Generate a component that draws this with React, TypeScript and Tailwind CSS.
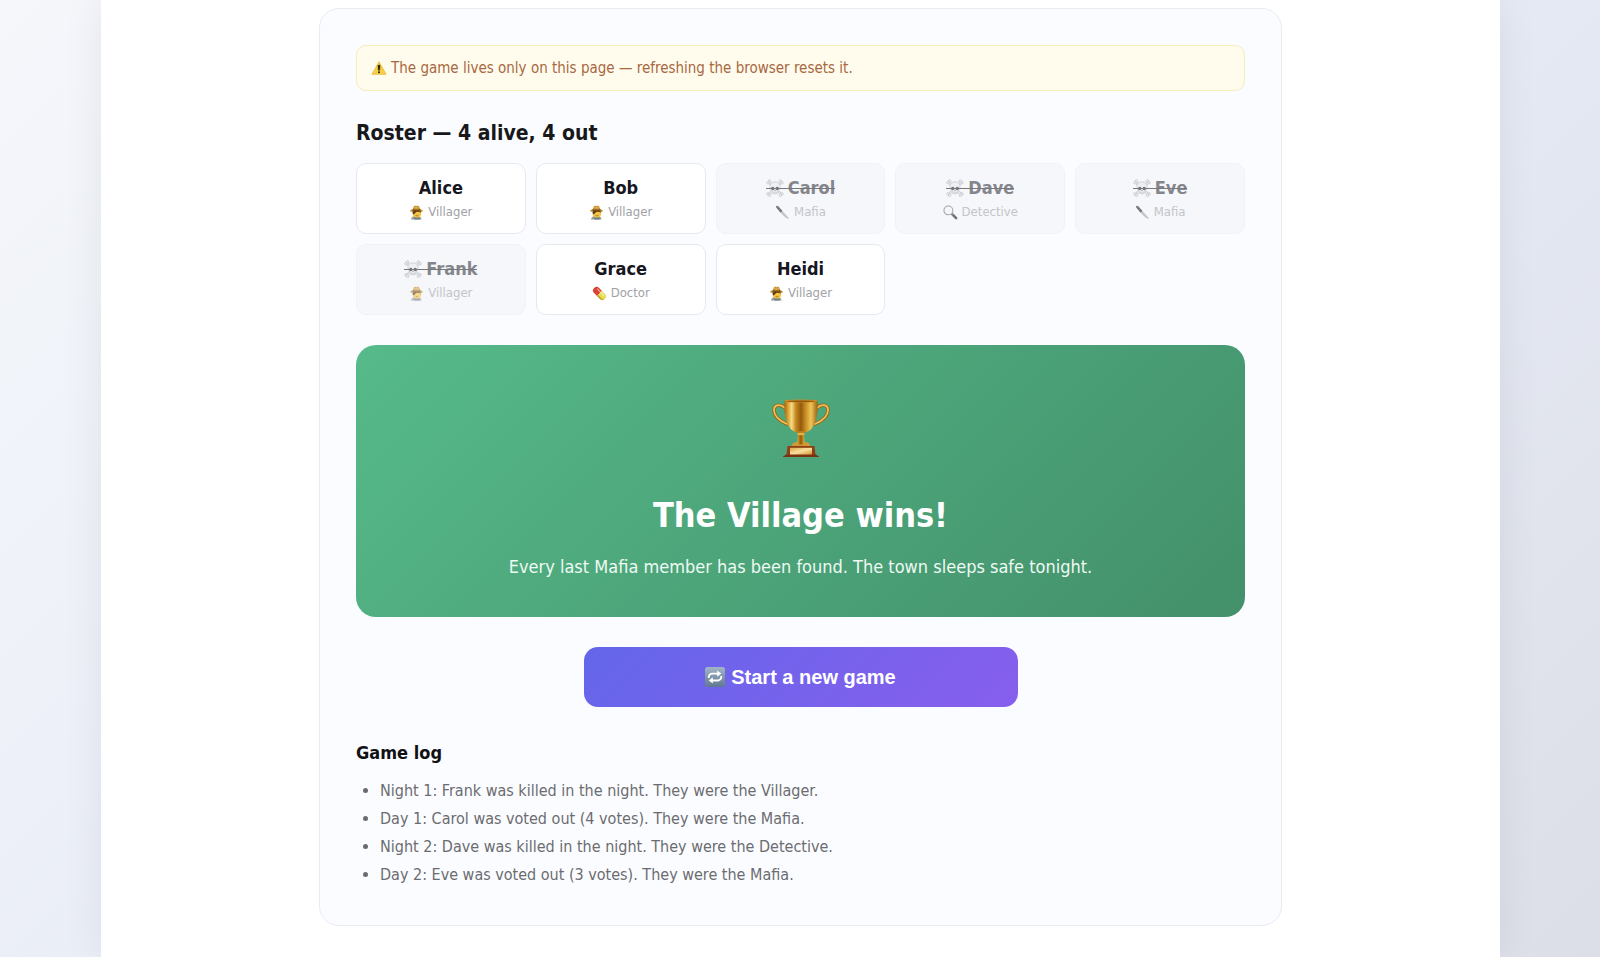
import type { ReactNode } from 'react';
import clsx from 'clsx';

type Role = 'Villager' | 'Mafia' | 'Detective' | 'Doctor';

type Player = {
  name: string;
  role: Role;
  alive: boolean;
};

const players: Player[] = [
  { name: 'Alice', role: 'Villager', alive: true },
  { name: 'Bob', role: 'Villager', alive: true },
  { name: 'Carol', role: 'Mafia', alive: false },
  { name: 'Dave', role: 'Detective', alive: false },
  { name: 'Eve', role: 'Mafia', alive: false },
  { name: 'Frank', role: 'Villager', alive: false },
  { name: 'Grace', role: 'Doctor', alive: true },
  { name: 'Heidi', role: 'Villager', alive: true },
];

const log = [
  'Night 1: Frank was killed in the night. They were the Villager.',
  'Day 1: Carol was voted out (4 votes). They were the Mafia.',
  'Night 2: Dave was killed in the night. They were the Detective.',
  'Day 2: Eve was voted out (3 votes). They were the Mafia.',
];

function WarningIcon() {
  return (
    <svg viewBox="0 0 32 32" className="size-4 shrink-0" aria-hidden="true">
      <path d="M16 3.5 30 28.5H2Z" fill="#f9cf46" stroke="#edc23f" strokeWidth="2" strokeLinejoin="round" />
      <path d="M14 10.5h4l-.8 10h-2.4Z" fill="#1f1a10" stroke="#1f1a10" strokeLinejoin="round" />
      <circle cx="16" cy="24.6" r="2" fill="#1f1a10" />
    </svg>
  );
}

function FarmerIcon() {
  return (
    <svg viewBox="0 0 32 32" className="size-[15px] shrink-0" aria-hidden="true">
      <path d="M4 31c1-5 5-8 11-8s11 2 12 8Z" fill="#9a9c96" />
      <path d="M12 23h9l2 8H11Z" fill="#6d7f86" />
      <path d="M13 25c2 2 5 2 7 0v-5h-7Z" fill="#d99c1e" />
      <ellipse cx="17" cy="18" rx="9" ry="8.500" fill="#f4c646" />
      <path d="M7 12h19l-.5 4c-5-2-8-2-10-1-2 1.500-3 4-7 5Z" fill="#5a3413" />
      <path d="M2 13c3 3 7 0 14 0s11 3 14 0c-1-2-3-3-6-4l-2-5c-1-3-4-2-6-2s-5-1-6 2L8 9c-3 1-5 2-6 4Z" fill="#c08a2c" />
      <path d="M8 9c5 1.500 11 1.500 16 0l.6 2.600c-5 1-12 1-17.200 0Z" fill="#5b3712" />
      <path d="M11 4c3-1.500 7-1.500 10 0l1 3c-4 1-8 1-12 0Z" fill="#dba948" />
      <path d="M14 22c2 1.500 4 1.500 6 0" fill="none" stroke="#8a4d14" strokeWidth="1.500" />
    </svg>
  );
}

function KnifeIcon() {
  return (
    <svg viewBox="0 0 32 32" className="size-[15px] shrink-0" aria-hidden="true">
      <path d="M3 2c1-1 3-.5 4 .5l9 10.500-4 3.500L3 6C2 4.500 2 3 3 2Z" fill="#1b1b1e" />
      <path d="m12 16.500 4-3.500 13 14c1 1.500.5 3-1 2.500-6-2-12-8-16-13Z" fill="#a9adb3" />
      <path d="m14 15 13.500 14" stroke="#7c8087" strokeWidth="1" />
      <circle cx="5" cy="4.500" r=".8" fill="#aaa" />
      <circle cx="9.500" cy="10" r=".8" fill="#aaa" />
    </svg>
  );
}

function MagnifierIcon() {
  return (
    <svg viewBox="0 0 32 32" className="size-[15px] shrink-0" aria-hidden="true">
      <path d="m19 19 9 9" stroke="#1c1c20" strokeWidth="5.500" strokeLinecap="round" />
      <path d="m17 17 4 4" stroke="#66686d" strokeWidth="3" />
      <circle cx="11.500" cy="11.500" r="9.500" fill="#f1f5f8" stroke="#6c7076" strokeWidth="2.200" />
      <path d="M6 10c1-3 3-4 6-4.500" fill="none" stroke="#fff" strokeWidth="1.500" strokeLinecap="round" />
    </svg>
  );
}

function PillIcon() {
  return (
    <svg viewBox="0 0 32 32" className="size-[15px] shrink-0" aria-hidden="true">
      <g transform="rotate(46 16 16)">
        <path d="M16 8.500H7a7.500 7.500 0 0 0 0 15h9Z" fill="#d9432f" />
        <path d="M16 8.500h9a7.500 7.500 0 0 1 0 15h-9Z" fill="#e9dc50" />
        <path d="M16 20h10a5 5 0 0 0 5-3 7 7 0 0 1-6 6.500h-9Z" fill="#b5a735" />
        <path d="M6 12.500h19" stroke="#fff" strokeOpacity=".7" strokeWidth="2" strokeLinecap="round" />
      </g>
    </svg>
  );
}

function SkullIcon() {
  return (
    <svg viewBox="0 0 32 32" className="size-[18px] shrink-0" aria-hidden="true">
      <g strokeLinecap="round">
        <path d="m5 6 22 21M27 6 5 27" strokeWidth="4" stroke="#94979c" />
        <path d="m5 6 22 21M27 6 5 27" strokeWidth="2.400" stroke="#e9eaec" />
      </g>
      <g fill="#e9eaec" stroke="#94979c" strokeWidth="1">
        <circle cx="3.500" cy="6.500" r="2.300" />
        <circle cx="6.500" cy="3.500" r="2.300" />
        <circle cx="28.500" cy="6.500" r="2.300" />
        <circle cx="25.500" cy="3.500" r="2.300" />
        <circle cx="3.500" cy="26.500" r="2.300" />
        <circle cx="6.500" cy="29" r="2.300" />
        <circle cx="28.500" cy="26.500" r="2.300" />
        <circle cx="25.500" cy="29" r="2.300" />
        <path d="M16 5c-6 0-9 4-9 8.500 0 4 1.500 6 4 7.500v4c3 2 7 2 10 0v-4c2.500-1.500 4-3.500 4-7.500C25 9 22 5 16 5Z" />
      </g>
      <ellipse cx="12" cy="17" rx="3" ry="3.200" fill="#1c1d20" />
      <ellipse cx="20" cy="17" rx="3" ry="3.200" fill="#1c1d20" />
      <path d="m16 19-1.300 2.500h2.600Z" fill="#1c1d20" />
      <path d="M13.500 22.500v3M16 22.500v3.500M18.500 22.500v3" stroke="#85888c" strokeWidth=".8" />
    </svg>
  );
}

function TrophyIcon() {
  return (
    <svg viewBox="0 0 64 64" className="size-16" aria-hidden="true">
      <defs>
        <linearGradient id="cup" x1="0" x2="1">
          <stop offset="0" stopColor="#a8660f" />
          <stop offset=".12" stopColor="#dba637" />
          <stop offset=".22" stopColor="#f7dc88" />
          <stop offset=".34" stopColor="#c68a22" />
          <stop offset=".5" stopColor="#94590d" />
          <stop offset=".64" stopColor="#c88e24" />
          <stop offset=".8" stopColor="#edc55a" />
          <stop offset="1" stopColor="#9d5f0d" />
        </linearGradient>
        <linearGradient id="plate" x1="0" x2="1" y2="1">
          <stop offset="0" stopColor="#dfa846" />
          <stop offset=".5" stopColor="#f8e0a0" />
          <stop offset="1" stopColor="#d79634" />
        </linearGradient>
      </defs>
      <g fill="none" strokeLinecap="round">
        <path d="M16 15C12 11 5 11 5 17 5 23 11 28 18 31" stroke="#9a5f10" strokeWidth="3.400" />
        <path d="M16 15C12 11 5 11 5 17 5 23 11 28 18 31" stroke="#edbf57" strokeWidth="1.800" />
        <path d="M48 15c4-4 11-4 11 2C59 23 53 28 46 31" stroke="#9a5f10" strokeWidth="3.400" />
        <path d="M48 15c4-4 11-4 11 2C59 23 53 28 46 31" stroke="#edbf57" strokeWidth="1.800" />
      </g>
      <path d="M15.500 8h33c.8 15-2 29-12.500 31.500h-8C17.500 37 14.700 23 15.500 8Z" fill="url(#cup)" />
      <ellipse cx="32" cy="8" rx="16.500" ry="1.600" fill="#c88c25" />
      <ellipse cx="32" cy="8.300" rx="14" ry=".8" fill="#8d560f" />
      <path d="M28 38h8l-1 4h-6Z" fill="#b97c1d" />
      <path d="M29 42h6l.5 7 4.500 4H24l4.500-4Z" fill="url(#cup)" />
      <ellipse cx="32" cy="41" rx="4" ry="1.200" fill="#e3b148" />
      <path d="M23.500 51c2-2.500 5-2 5.500.5h6c.5-2.500 3.500-3 5.500-.5l1 2.500h-19Z" fill="#d29a35" />
      <path d="M18.500 53h27l1 9h-29Z" fill="#8d3f17" />
      <path d="M17 61.500h30l3.500 2.500h-37Z" fill="#7a3312" />
      <path d="M21 54.800h22v6.700H21Z" fill="url(#plate)" />
    </svg>
  );
}

function RepeatIcon() {
  return (
    <svg viewBox="0 0 32 32" className="size-5 shrink-0" aria-hidden="true">
      <defs>
        <linearGradient id="tile" x2="0" y2="1">
          <stop offset="0" stopColor="#a3b5c8" />
          <stop offset="1" stopColor="#5f7891" />
        </linearGradient>
      </defs>
      <rect x="0" y="0" width="32" height="32" rx="4" fill="url(#tile)" />
      <path d="M6 17.500V16a5.500 5.500 0 0 1 5.500-5.500H21M26 14.500V16a5.500 5.500 0 0 1-5.500 5.500H11" fill="none" stroke="#fff" strokeWidth="3" />
      <path d="m19.500 5.500 6.500 5-6.500 5ZM12.500 16.500l-6.500 5 6.500 5Z" fill="#fff" />
    </svg>
  );
}

const roleIcons: Record<Role, ReactNode> = {
  Villager: <FarmerIcon />,
  Mafia: <KnifeIcon />,
  Detective: <MagnifierIcon />,
  Doctor: <PillIcon />,
};

function PlayerCard({ name, role, alive }: Player) {
  return (
    <li
      className={clsx(
        'flex flex-col items-center rounded-[10px] border px-2 py-3',
        alive ? 'border-[#e8e9ee] bg-white' : 'border-[#f0f2f7] bg-[#f6f7fb]'
      )}
    >
      <div className={clsx('relative flex items-center gap-1 text-lg leading-6 font-bold', alive ? 'text-[#16171f]' : 'text-[#85868b]')}>
        {!alive && (
          <span className="opacity-60">
            <SkullIcon />
          </span>
        )}
        {name}
        {!alive && <span className="absolute inset-x-0 top-1/2 h-px bg-[#77787d]" />}
      </div>
      <div className={clsx('mt-[3px] flex items-center gap-1 text-[13px] leading-[18px]', alive ? 'text-[#a0a1a5]' : 'text-[#c3c4c9]')}>
        <span className={clsx('flex', !alive && 'opacity-60')}>{roleIcons[role]}</span>
        {role}
      </div>
    </li>
  );
}

export default function App() {
  const alive = players.filter((p) => p.alive).length;

  return (
    <main className="min-h-screen bg-linear-135 from-[#f5f7fb] via-[#e8ecf6] to-[#dcdfe8] pr-[100px] pl-[101px] font-['DejaVu_Sans_Condensed','DejaVu_Sans',sans-serif]">
      <div className="min-h-screen bg-white px-6 pt-2 pb-8 shadow-[0_0_40px_rgba(0,0,0,0.07)]">
        <div className="mx-auto max-w-[963px] rounded-[20px] border border-[#e8ebf0] bg-[#fbfcff] p-9">
          {/* Notice */}
          <p className="flex items-center gap-1 rounded-[10px] border border-[#f0eebb] bg-[#fffcee] px-3.5 py-2.5 text-[15px] leading-6 text-[#a8683f]">
            <WarningIcon />
            The game lives only on this page — refreshing the browser resets it.
          </p>

          {/* Roster */}
          <h2 className="mt-[26px] text-[21px] leading-8 font-bold text-[#18181b]">
            Roster — {alive} alive, {players.length - alive} out
          </h2>
          <ul className="mt-3.5 grid grid-cols-2 gap-2.5 md:grid-cols-5">
            {players.map((player) => (
              <PlayerCard key={player.name} {...player} />
            ))}
          </ul>

          {/* Result */}
          <section className="mt-[30px] flex flex-col items-center rounded-[20px] bg-linear-135 from-[#56ba8a] to-[#43906a] px-6 pt-12 pb-9 text-center text-white">
            <TrophyIcon />
            <h1 className="mt-9 text-[34px] leading-11 font-bold">The Village wins!</h1>
            <p className="mt-4 text-lg leading-7 text-[#eefaf3]">
              Every last Mafia member has been found. The town sleeps safe tonight.
            </p>
          </section>

          <button
            type="button"
            className="mx-auto mt-[30px] flex h-[60px] w-full max-w-[434px] cursor-pointer items-center justify-center gap-1.5 rounded-[14px] bg-linear-135 from-[#6366ea] to-[#875eee] font-['Liberation_Sans',Arial,sans-serif] text-xl font-bold text-white"
          >
            <RepeatIcon />
            Start a new game
          </button>

          {/* Log */}
          <h3 className="mt-[30px] text-lg leading-8 font-bold text-[#111113]">Game log</h3>
          <ul className="mt-2 list-disc pl-6 text-base leading-7 text-[#6b6c70]">
            {log.map((entry) => (
              <li key={entry}>{entry}</li>
            ))}
          </ul>
        </div>
      </div>
    </main>
  );
}
